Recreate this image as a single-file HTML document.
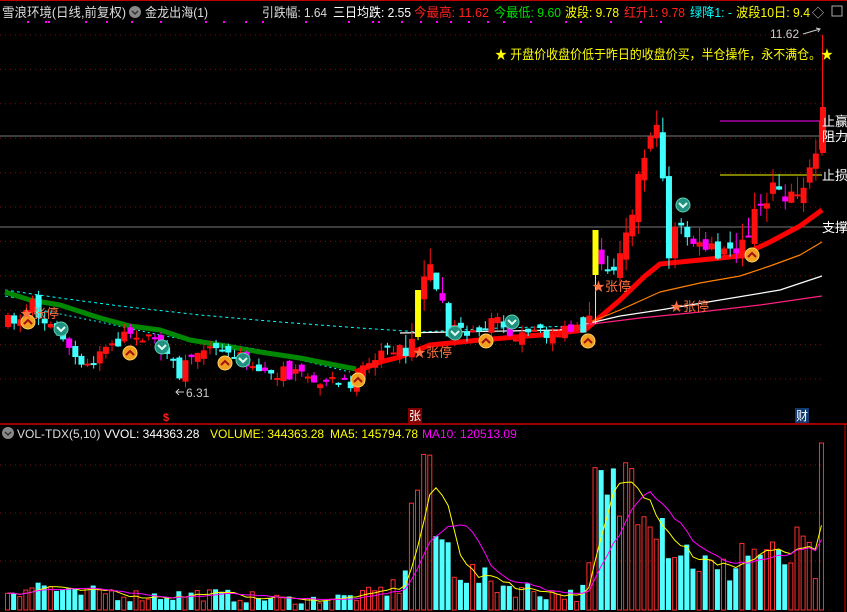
<!DOCTYPE html>
<html><head><meta charset="utf-8">
<style>
html,body{margin:0;padding:0;background:#000;width:847px;height:612px;overflow:hidden}
svg{display:block}
text{font-family:"Liberation Sans","Noto Sans CJK SC",sans-serif}
</style></head>
<body>
<svg id="s" width="847" height="612" xmlns="http://www.w3.org/2000/svg">
<defs><clipPath id="vc"><rect x="0" y="442" width="847" height="170"/></clipPath></defs>
<rect width="847" height="612" fill="#000"/>
<line x1="0" y1="0.5" x2="847" y2="0.5" stroke="#c00000"/>
<g id="grid"></g>
<line x1="0" y1="136" x2="847" y2="136" stroke="#777"/>
<line x1="0" y1="227" x2="847" y2="227" stroke="#777"/>
<line x1="720" y1="121" x2="822" y2="121" stroke="#ff00ff"/>
<line x1="720" y1="175" x2="822" y2="175" stroke="#ffff00"/>
<g id="ma"></g>
<g id="cd"></g>
<g id="ic"></g>
<g id="vol" clip-path="url(#vc)"></g>
<line x1="0" y1="424" x2="847" y2="424" stroke="#d00000" stroke-width="1.5"/>
<line x1="845" y1="424" x2="845" y2="612" stroke="#d00000"/>
<text x="2" y="17" font-size="13" fill="#ddd" textLength="124" lengthAdjust="spacingAndGlyphs">雪浪环境(日线,前复权)</text>
<circle cx="135" cy="12" r="6" fill="#888"/><path d="M132 11l3 3 3-3" stroke="#333" stroke-width="1.5" fill="none"/>
<text x="145" y="17" font-size="13" fill="#ddd" textLength="63" lengthAdjust="spacingAndGlyphs">金龙出海(1)</text>
<text x="262" y="17" font-size="13" fill="#ddd" textLength="65" lengthAdjust="spacingAndGlyphs">引跌幅: 1.64</text>
<text x="333" y="17" font-size="13" fill="#fff" textLength="78" lengthAdjust="spacingAndGlyphs">三日均跌: 2.55</text>
<text x="414" y="17" font-size="13" fill="#ff2020" textLength="75" lengthAdjust="spacingAndGlyphs">今最高: 11.62</text>
<text x="494" y="17" font-size="13" fill="#00e000" textLength="67" lengthAdjust="spacingAndGlyphs">今最低: 9.60</text>
<text x="565" y="17" font-size="13" fill="#ffff00" textLength="54" lengthAdjust="spacingAndGlyphs">波段: 9.78</text>
<text x="624" y="17" font-size="13" fill="#ff2020" textLength="61" lengthAdjust="spacingAndGlyphs">红升1: 9.78</text>
<text x="690" y="17" font-size="13" fill="#00ffff" textLength="42" lengthAdjust="spacingAndGlyphs">绿降1: -</text>
<text x="736" y="17" font-size="13" fill="#ffff00" textLength="74" lengthAdjust="spacingAndGlyphs">波段10日: 9.4</text>
<text x="812" y="17" font-size="12" fill="#ccc">◇</text>
<rect x="832" y="6" width="10" height="10" fill="none" stroke="#aaa"/>
<g id="dots"></g>
<text x="495" y="59" font-size="13" fill="#ffff00" textLength="338" lengthAdjust="spacingAndGlyphs">★ 开盘价收盘价低于昨日的收盘价买，半仓操作，永不满仓。★</text>
<text x="770" y="38" font-size="12" fill="#ccc">11.62</text>
<path d="M803 34l17-5m-4-1l4 1-2 3" stroke="#ccc" fill="none"/>
<text x="822" y="126" font-size="13" fill="#fff">止赢</text>
<text x="822" y="141" font-size="13" fill="#fff">阻力</text>
<text x="822" y="180" font-size="13" fill="#fff">止损</text>
<text x="822" y="232" font-size="13" fill="#fff">支撑</text>
<text x="186" y="397" font-size="12" fill="#ccc">6.31</text>
<path d="M184 392h-8m3-3l-3 3 3 3" stroke="#ccc" fill="none"/>
<text x="163" y="421" font-size="11" fill="#ff2020" font-weight="bold">$</text>
<rect x="408" y="408" width="14" height="15" fill="#800000"/><text x="409" y="420" font-size="12" fill="#fff">张</text>
<rect x="795" y="408" width="14" height="15" fill="#103a70"/><text x="796" y="420" font-size="12" fill="#fff">财</text>
<circle cx="8" cy="433" r="6" fill="#888"/><path d="M5 432l3 3 3-3" stroke="#333" stroke-width="1.5" fill="none"/>
<text y="438" font-size="12"><tspan x="17" fill="#ddd">VOL-TDX(5,10)</tspan><tspan x="104" fill="#fff">VVOL: 344363.28</tspan><tspan x="210" fill="#ffff00">VOLUME: 344363.28</tspan><tspan x="330" fill="#ffff00">MA5: 145794.78</tspan><tspan x="422" fill="#ff00ff">MA10: 120513.09</tspan></text>
</svg>
<script>
var NS="http://www.w3.org/2000/svg";
function el(p,t,a){var e=document.createElementNS(NS,t);for(var k in a)e.setAttribute(k,a[k]);document.getElementById(p).appendChild(e);return e;}
function interp(pts,x){for(var i=0;i<pts.length-1;i++){if(x<=pts[i+1][0]){var a=pts[i],b=pts[i+1];return a[1]+(b[1]-a[1])*(x-a[0])/(b[0]-a[0]);}}return pts[pts.length-1][1];}
var seed=7;function rnd(){seed=(seed*16807)%2147483647;return seed/2147483647;}
[35,69.4,103.8,138.2,172.6,207,241.4,275.8,310.2,344.6,379,465,513,561].forEach(function(y){el("grid","line",{x1:0,y1:y,x2:822,y2:y,stroke:"#7a1010","stroke-dasharray":"1,4"});});
[27,45,48,85,106,131,160,205,223,245,262,305,348,372,378,401,420,436,450,468,487,503,530,565,580,610,640,660].forEach(function(x){el("dots","rect",{x:x*1,y:21,width:2,height:2,fill:"#ff00ff"});});
function poly(pts,c,w,dash){el("ma","polyline",{points:pts.map(function(p){return p.join(",")}).join(" "),fill:"none",stroke:c,"stroke-width":w,"stroke-dasharray":dash||"","stroke-linejoin":"round"});}
poly([[5,296],[40,302],[80,310],[130,325],[190,338],[250,348],[300,357],[340,364],[357,368]],"#00ffff",1,"3,3");
poly([[5,290],[60,298],[120,306],[200,315],[280,322],[360,328],[420,332],[500,328],[580,326]],"#00ffff",1,"3,3");
poly([[40,310],[100,322],[160,335],[230,348],[300,360],[350,372]],"#00ffff",1,"2,3");
poly([[5,292],[30,300],[60,305],[100,318],[130,326],[160,330],[190,340],[220,345],[260,352],[300,358],[340,366],[356,369]],"#008800",5);
poly([[355,372],[380,362],[400,357],[430,345],[480,340],[540,335],[585,330],[620,300],[645,276],[660,264],[680,262],[700,260],[740,256],[770,242],[800,226],[822,210]],"#ff0000",5);
poly([[583,325],[620,310],[660,292],[700,283],[740,276],[770,266],[800,255],[822,242]],"#ff8000",1.2);
poly([[400,333],[560,330],[620,316],[660,310],[720,300],[780,290],[822,276]],"#ffffff",1.2);
poly([[560,328],[640,318],[700,312],[760,305],[822,296]],"#ff2080",1.2);
var P=[[5,322],[20,318],[30,305],[40,320],[60,336],[70,355],[80,372],[95,352],[110,345],[130,330],[150,340],[165,355],[175,378],[190,355],[200,345],[220,352],[240,358],[260,370],[300,376],[330,383],[345,386],[355,372],[380,350],[405,348],[415,300],[425,258],[432,290],[445,330],[470,336],[490,318],[500,328],[520,336],[580,330],[588,300],[595,235],[605,280],[615,250],[630,200],[640,160],[650,118],[660,170],[666,260],[672,230],[680,215],[690,240],[705,255],[720,255],[735,245],[748,220],[760,200],[772,185],[785,190],[800,182],[812,170],[822,115]];
var N=134,sp=6.12,C=[],prev=322;
for(var i=0;i<N;i++){var x=5+i*sp;var big=x>580||(x>400&&x<440);var c=interp(P,x)+(rnd()-0.5)*(big?26:14);var o=prev+(rnd()-0.5)*(big?20:12);var hi=Math.min(o,c)-rnd()*(big?18:8);var lo=Math.max(o,c)+rnd()*(big?14:8);
 var up=c<o;var col=up?"#ff1010":(rnd()<0.25?"#ff00ff":"#40ffff");
 if(Math.abs(x-416)<4||Math.abs(x-593)<4)col="#ffff00";
 el("cd","line",{x1:x+3,y1:hi,x2:x+3,y2:lo,stroke:col});
 var t=Math.min(o,c),h=Math.max(2,Math.abs(o-c));
 if(col=="#ffff00"){t=x<500?290:230;h=x<500?47:45;}
 el("cd","rect",{x:x,y:t,width:6,height:h,fill:col});
 C.push({x:x,up:up});prev=c;}
el("cd","line",{x1:822.5,y1:35,x2:822.5,y2:120,stroke:"#ff1010"});
el("cd","rect",{x:820,y:107,width:6,height:46,fill:"#ff1010"});
function gold(x,y){el("ic","circle",{cx:x,cy:y,r:7,fill:"#f0a020",stroke:"#ffd060"});el("ic","path",{d:"M"+(x-4)+" "+(y+2)+"l4-4 4 4",stroke:"#a01010","stroke-width":2,fill:"none"});}
function teal(x,y){el("ic","circle",{cx:x,cy:y,r:7,fill:"#209080",stroke:"#60d0b0"});el("ic","path",{d:"M"+(x-4)+" "+(y-2)+"l4 4 4-4",stroke:"#e0fff0","stroke-width":2,fill:"none"});}
[[28,322],[130,353],[225,363],[358,380],[486,341],[588,341],[752,255]].forEach(function(p){gold(p[0],p[1]);});
[[61,329],[162,347],[243,360],[455,333],[512,322],[683,205]].forEach(function(p){teal(p[0],p[1]);});
function star(x,y){var t=el("ic","text",{x:x,y:y,"font-size":"13",fill:"#ff7040"});t.textContent="★张停";}
star(20,318);star(413,357);star(592,291);star(670,311);
var V=[[5,20],[40,25],[70,15],[100,18],[140,14],[200,16],[260,12],[300,10],[360,14],[400,25],[408,85],[416,135],[422,165],[428,100],[434,75],[445,60],[460,40],[480,30],[500,25],[540,18],[575,15],[583,20],[590,60],[595,150],[602,95],[612,110],[625,130],[633,160],[642,140],[652,125],[660,90],[668,75],[680,60],[700,48],[715,35],[728,42],[740,65],[750,55],[760,62],[775,45],[790,55],[800,62],[812,38],[818,60],[822,167]];
var vs=[];
for(var i=0;i<N;i++){var x=5+i*sp;var v=Math.min(160,interp(V,x)*(0.55+rnd()*0.9));if(x>815)v=167;vs.push(v);
 if(C[i].up)el("vol","rect",{x:x+0.5,y:610-v,width:4,height:v,fill:"none",stroke:"#ff3030"});
 else el("vol","rect",{x:x,y:610-v,width:5,height:v,fill:"#50ffff"});}
function ma(n,col){var pts=[];for(var i=0;i<N;i++){var s=0,k=0;for(var j=Math.max(0,i-n+1);j<=i;j++){s+=vs[j];k++;}pts.push((5+i*sp+2.5)+","+(610-s/k));}el("vol","polyline",{points:pts.join(" "),fill:"none",stroke:col,"stroke-width":1});}
ma(5,"#ffff00");ma(10,"#ff00ff");
</script>
</body></html>
